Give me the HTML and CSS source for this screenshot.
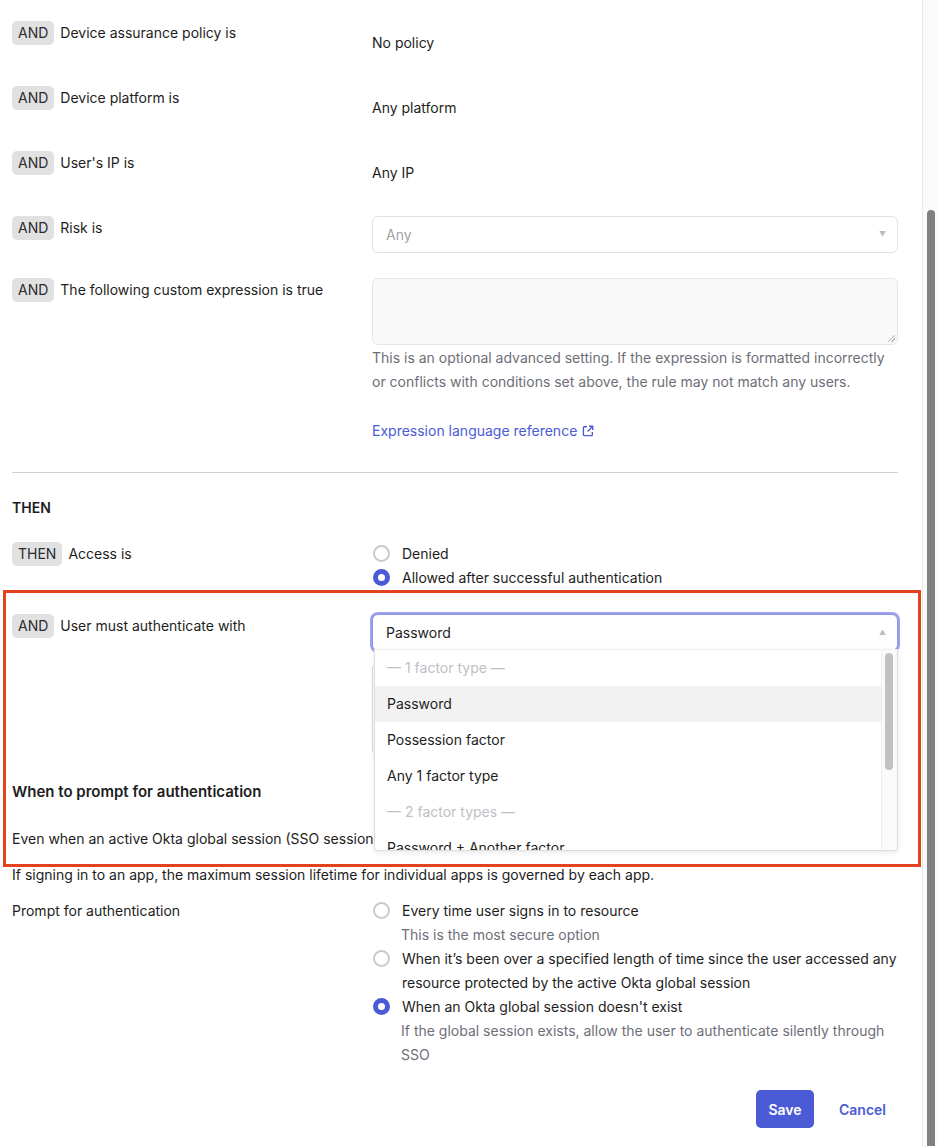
FILE: index.html
```html
<!DOCTYPE html>
<html lang="en">

<head>
    <meta charset="UTF-8">
    <meta name="viewport" content="width=device-width, initial-scale=1.0">
    <title>Rule</title>
    <link rel="stylesheet" href="styles.css">
</head>

<body>
    <form class="rule-form">
        <!-- IF conditions -->
        <div class="row row-cond">
            <div class="row-label"><span class="badge">AND</span><span>Device assurance policy is</span></div>
            <div class="row-value">No policy</div>
        </div>

        <div class="row row-cond">
            <div class="row-label"><span class="badge">AND</span><span>Device platform is</span></div>
            <div class="row-value">Any platform</div>
        </div>

        <div class="row row-cond">
            <div class="row-label"><span class="badge">AND</span><span>User's IP is</span></div>
            <div class="row-value">Any IP</div>
        </div>

        <div class="row row-risk">
            <div class="row-label"><span class="badge">AND</span><span>Risk is</span></div>
            <div class="select select-muted">
                <span>Any</span>
                <span class="caret">&#9660;</span>
            </div>
        </div>

        <div class="row">
            <div class="row-label"><span class="badge">AND</span><span>The following custom expression is true</span></div>
            <div>
                <div class="textarea"><span class="grip"></span></div>
                <p class="help">This is an optional advanced setting. If the expression is formatted incorrectly or conflicts with conditions set above, the rule may not match any users.</p>
                <a class="link" href="#">Expression language reference
                    <svg class="ext" width="12" height="12" viewBox="0 0 12 12" fill="none" stroke="currentColor" stroke-width="1.4">
                        <path d="M5 1.7H2.2a0.8 0.8 0 0 0-0.8 0.8v7.3a0.8 0.8 0 0 0 0.8 0.8h7.3a0.8 0.8 0 0 0 0.8-0.8V7" />
                        <path d="M7 1.3h3.7V5" />
                        <path d="M10.5 1.5L5.6 6.4" />
                    </svg>
                </a>
            </div>
        </div>

        <hr class="divider">

        <!-- THEN -->
        <h3 class="section-title">THEN</h3>

        <div class="row row-then">
            <div class="row-label"><span class="badge">THEN</span><span>Access is</span></div>
            <div class="radios">
                <label class="radio"><span class="dot"></span>Denied</label>
                <label class="radio"><span class="dot checked"></span>Allowed after successful authentication</label>
            </div>
        </div>

        <div class="row row-auth">
            <div class="row-label"><span class="badge">AND</span><span>User must authenticate with</span></div>
            <div class="auth-field">
                <div class="select select-open">
                    <span>Password</span>
                    <span class="caret">&#9650;</span>
                </div>
                <div class="behind-box"></div>

                <div class="menu">
                    <ul class="menu-items">
                        <li class="group">— 1 factor type —</li>
                        <li class="active">Password</li>
                        <li>Possession factor</li>
                        <li>Any 1 factor type</li>
                        <li class="group">— 2 factor types —</li>
                        <li>Password + Another factor</li>
                    </ul>
                    <div class="menu-track"><span class="menu-thumb"></span></div>
                </div>
            </div>
        </div>

        <!-- Prompt -->
        <h3 class="prompt-title">When to prompt for authentication</h3>
        <p class="para">Even when an active Okta global session (SSO session) exists, users are prompted to authenticate according to the settings below.</p>
        <p class="para">If signing in to an app, the maximum session lifetime for individual apps is governed by each app.</p>

        <div class="row row-prompt">
            <div class="row-label"><span>Prompt for authentication</span></div>
            <div class="radios">
                <label class="radio"><span class="dot"></span>Every time user signs in to resource</label>
                <p class="radio-desc">This is the most secure option</p>
                <label class="radio"><span class="dot"></span>When it’s been over a specified length of time since the user accessed any resource protected by the active Okta global session</label>
                <label class="radio"><span class="dot checked"></span>When an Okta global session doesn't exist</label>
                <p class="radio-desc">If the global session exists, allow the user to authenticate silently through SSO</p>
            </div>
        </div>

        <div class="actions">
            <button type="button" class="btn btn-primary">Save</button>
            <button type="button" class="btn btn-link">Cancel</button>
        </div>

        <!-- Marca de anotación -->
        <div class="highlight"></div>
    </form>

    <div class="page-scroll"><span class="page-thumb"></span></div>
</body>

</html>
```

FILE: styles.css
```css
/* General */
body {
    margin: 0;
    padding: 0;
    background: #fff;
    color: #1d1d21;
    font-family: 'Inter', 'Noto Sans', sans-serif;
    font-size: 14px;
    line-height: 24px;
    overflow: hidden;
}

.rule-form {
    position: relative;
    width: 886px;
    padding: 21px 0 0 12px;
}

.row {
    display: grid;
    grid-template-columns: 360px 526px;
}

.row-cond {
    height: 65px;
}

.row-risk {
    height: 62px;
}

.row-label {
    display: flex;
    align-items: flex-start;
    gap: 6px;
}

.badge {
    display: inline-block;
    height: 24px;
    padding: 0 6px;
    background: #e1e1e1;
    border-radius: 5px;
    color: #2b2b30;
}

.row-value {
    padding-top: 10px;
}

/* Campos */
.select {
    position: relative;
    box-sizing: border-box;
    height: 37px;
    padding: 0 13px;
    display: flex;
    align-items: center;
    justify-content: space-between;
    background: #fff;
    border: 1px solid #e2e2e2;
    border-radius: 6px;
}

.select-muted {
    color: #a3a3a8;
}

.caret {
    font-size: 7px;
    color: #bcbcc0;
    margin-right: -2px;
}

.textarea {
    position: relative;
    box-sizing: border-box;
    height: 67px;
    background: #f9f9f9;
    border: 1px solid #e6e6e6;
    border-radius: 6px;
}

.grip {
    position: absolute;
    right: 2px;
    bottom: 2px;
    width: 7px;
    height: 7px;
    background: linear-gradient(135deg, transparent 45%, #b9b9b9 46%, #b9b9b9 54%, transparent 55%, transparent 70%, #b9b9b9 71%, #b9b9b9 79%, transparent 80%);
}

.help {
    margin: 1px 0 0;
    color: #6e6e78;
}

.link {
    display: inline-flex;
    align-items: center;
    gap: 5px;
    margin-top: 25px;
    color: #4b5bd6;
    text-decoration: none;
}

.divider {
    margin: 29px 0 0;
    border: none;
    border-top: 1px solid #d2d2d4;
}

.section-title {
    margin: 23px 0 22px;
    font-size: 14px;
    line-height: 24px;
    font-weight: 600;
}

/* Radios */
.radios {
    display: flex;
    flex-direction: column;
}

.radio {
    display: flex;
    align-items: flex-start;
    gap: 12px;
}

.dot {
    flex: none;
    box-sizing: border-box;
    width: 17px;
    height: 17px;
    margin-top: 3px;
    margin-left: 1px;
    border: 2px solid #cacaca;
    border-radius: 50%;
    background: #fff;
}

.dot.checked {
    border: 5px solid #4b5bd6;
}

.radio-desc {
    margin: 0 0 0 29px;
    color: #6e6e78;
}

.row-then {
    height: 72px;
}

/* Autenticación */
.row-auth {
    height: 166px;
}

.auth-field {
    position: relative;
}

.select-open {
    margin-top: 0;
    height: 37px;
    border-color: #8c95e4;
    box-shadow: 0 0 0 2px #9ba2ea;
}

.behind-box {
    box-sizing: border-box;
    margin-top: 12px;
    height: 92px;
    border: 1px solid #dcdcdc;
    border-radius: 6px;
}

.menu {
    position: absolute;
    top: 35px;
    left: 2px;
    z-index: 2;
    box-sizing: border-box;
    width: 524px;
    height: 202px;
    display: flex;
    background: #fff;
    border: 1px solid #dcdcdc;
    border-top-color: #f0f0f0;
    border-radius: 0 0 4px 4px;
    box-shadow: 0 2px 6px rgba(0, 0, 0, 0.08);
    overflow: hidden;
}

.menu-items {
    flex: 1;
    margin: 0;
    padding: 0;
    list-style: none;
}

.menu-items li {
    height: 36px;
    line-height: 36px;
    padding-left: 12px;
}

.menu-items .group {
    color: #c0c0c4;
}

.menu-items .active {
    background: #f2f2f2;
}

.menu-track {
    width: 15px;
    background: #fafafa;
    border-left: 1px solid #ededed;
}

.menu-thumb {
    display: block;
    width: 8px;
    height: 117px;
    margin: 3px 0 0 3px;
    background: #c1c1c1;
    border-radius: 4px;
}

/* Prompt */
.prompt-title {
    margin: 0 0 23px;
    font-size: 15px;
    line-height: 24px;
    font-weight: 600;
}

.para {
    margin: 0 0 12px;
    white-space: nowrap;
}

.actions {
    display: flex;
    justify-content: flex-end;
    gap: 13px;
    margin-top: 23px;
}

.btn {
    height: 38px;
    padding: 0 12px;
    font-family: inherit;
    font-size: 14px;
    font-weight: 600;
    border: none;
    border-radius: 5px;
    cursor: pointer;
}

.btn-primary {
    width: 58px;
    padding: 0;
    background: #4b5bd6;
    color: #fff;
}

.btn-link {
    background: transparent;
    color: #4b5bd6;
}

.highlight {
    position: absolute;
    top: 590px;
    left: 3px;
    width: 912px;
    height: 271px;
    border: 3px solid #e2431e;
    pointer-events: none;
    z-index: 3;
}

/* Barra de desplazamiento */
.page-scroll {
    position: fixed;
    top: 0;
    right: 0;
    width: 14px;
    height: 100%;
    background: #fafafa;
    border-left: 1px solid #e8e8e8;
}

.page-thumb {
    display: block;
    width: 8px;
    height: 960px;
    margin: 210px 0 0 4px;
    background: #808080;
    border-radius: 4px;
}
```
